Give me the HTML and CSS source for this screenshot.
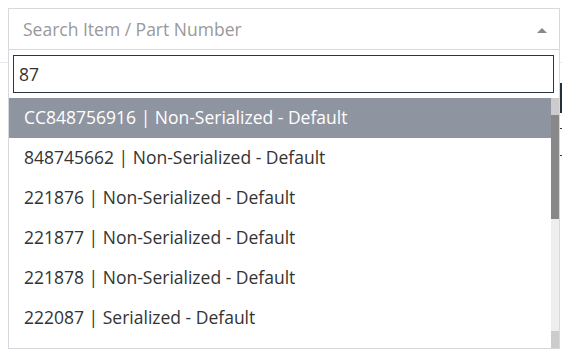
FILE: index.html
```html
<!DOCTYPE html>
<html lang="en">
<head>
  <meta charset="UTF-8">
  <meta name="viewport" content="width=device-width, initial-scale=1.0">
  <title>Item Picker</title>
  <link rel="stylesheet" href="styles.css">
</head>
<body>
  <!-- page content underneath the open dropdown -->
  <div class="page">
    <div class="page-rule"></div>
    <div class="page-side">
      <div class="side-button"></div>
      <div class="side-tick"></div>
      <div class="side-tick side-tick--low"></div>
    </div>
  </div>

  <div class="item-select">
    <div class="item-select__head">
      <span class="item-select__placeholder">Search Item / Part Number</span>
      <span class="item-select__arrow"></span>
    </div>
    <div class="item-select__drop">
      <div class="item-select__search">
        <input type="text" class="item-select__input" value="87">
      </div>
      <div class="item-select__results">
        <ul class="item-select__list">
          <li class="item-select__option is-active">CC848756916 | Non-Serialized - Default</li>
          <li class="item-select__option">848745662 | Non-Serialized - Default</li>
          <li class="item-select__option">221876 | Non-Serialized - Default</li>
          <li class="item-select__option">221877 | Non-Serialized - Default</li>
          <li class="item-select__option">221878 | Non-Serialized - Default</li>
          <li class="item-select__option">222087 | Serialized - Default</li>
        </ul>
        <div class="scrollbar">
          <div class="scrollbar__button"></div>
          <div class="scrollbar__track">
            <div class="scrollbar__thumb"></div>
          </div>
          <div class="scrollbar__button"></div>
        </div>
      </div>
    </div>
  </div>
</body>
</html>
```

FILE: styles.css
```css
html, body {
  margin: 0;
  padding: 0;
  background: #fff;
}

body {
  font-family: "Open Sans", Arial, sans-serif;
  color: #333;
  width: 562px;
  height: 349px;
  position: relative;
  overflow: hidden;
}

/* background page */
.page {
  height: 349px;
}

.page-rule {
  position: absolute;
  left: 0;
  right: 0;
  top: 62px;
  border-top: 1px solid #e6e8eb;
}

.page-side {
  position: absolute;
  left: 559px;
  top: 83px;
  width: 10px;
}

.side-button {
  height: 30px;
  background: #25303a;
}

.side-tick {
  margin-top: 15px;
  height: 1px;
  background: #333;
}

.side-tick--low {
  margin-top: 26px;
}

/* dropdown */
.item-select {
  position: absolute;
  top: 8px;
  left: 8px;
  width: 550px;
  border: 1px solid #d5d9de;
  background: #fff;
}

.item-select__head {
  display: flex;
  align-items: center;
  justify-content: space-between;
  height: 39px;
  padding: 0 12px 1px 14px;
  border-bottom: 1px solid #d5d9de;
}

.item-select__placeholder {
  font-size: 17.5px;
  color: #999;
}

.item-select__arrow {
  width: 0;
  height: 0;
  border-left: 5px solid transparent;
  border-right: 5px solid transparent;
  border-bottom: 5px solid #888;
  margin-top: 3px;
}

.item-select__search {
  padding: 5px 4px 5px 4px;
}

.item-select__input {
  display: block;
  box-sizing: border-box;
  width: 541px;
  height: 38px;
  margin: 0;
  padding: 0 5px;
  border: 1px solid #2b3640;
  border-radius: 0;
  outline: none;
  font-family: "Open Sans", Arial, sans-serif;
  font-size: 17.5px;
  color: #333;
}

.item-select__results {
  display: flex;
  height: 250px;
}

.item-select__list {
  flex: 1;
  list-style: none;
  margin: 0;
  padding: 0;
  overflow: hidden;
}

.item-select__option {
  height: 40px;
  line-height: 38px;
  padding: 0 15px;
  font-size: 17.5px;
  color: #333;
  white-space: nowrap;
}

.item-select__option.is-active {
  background: #8f94a1;
  color: #fff;
}

.scrollbar {
  display: flex;
  flex-direction: column;
  width: 8px;
}

.scrollbar__button {
  height: 17px;
  background: #ccc;
}

.scrollbar__track {
  flex: 1;
  background: #eee;
}

.scrollbar__thumb {
  height: 104px;
  background: #888;
}
```
